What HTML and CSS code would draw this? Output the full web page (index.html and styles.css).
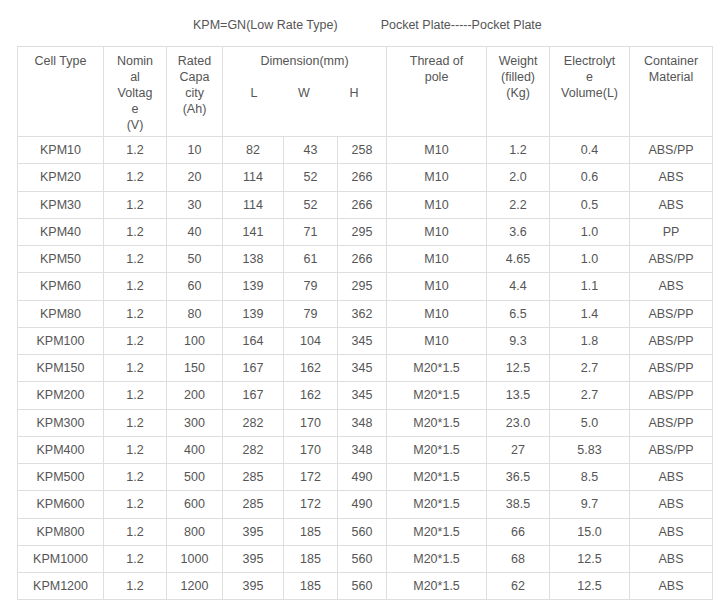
FILE: index.html
```html
<!DOCTYPE html>
<html lang="en">
<head>
<meta charset="utf-8">
<title>KPM Pocket Plate</title>
<link rel="stylesheet" href="styles.css">
</head>
<body>
<div class="page">
  <div class="title">
    <span class="title-a">KPM=GN(Low Rate Type)</span>
    <span class="title-b">Pocket Plate-----Pocket Plate</span>
  </div>
  <table class="spec">
    <colgroup>
      <col class="c1"><col class="c2"><col class="c3"><col class="c4"><col class="c5">
      <col class="c6"><col class="c7"><col class="c8"><col class="c9"><col class="c10">
    </colgroup>
    <thead>
      <tr>
        <th>Cell Type</th>
        <th>Nomin<br>al<br>Voltag<br>e<br>(V)</th>
        <th>Rated<br>Capa<br>city<br>(Ah)</th>
        <th colspan="3" class="dim">
          <div>Dimension(mm)</div>
          <div class="lwh"><span>L</span><span>W</span><span>H</span></div>
        </th>
        <th>Thread of<br>pole</th>
        <th>Weight<br>(filled)<br>(Kg)</th>
        <th>Electrolyt<br>e<br>Volume(L)</th>
        <th>Container<br>Material</th>
      </tr>
    </thead>
    <tbody>
      <tr><td>KPM10</td><td>1.2</td><td>10</td><td>82</td><td>43</td><td>258</td><td>M10</td><td>1.2</td><td>0.4</td><td>ABS/PP</td></tr>
      <tr><td>KPM20</td><td>1.2</td><td>20</td><td>114</td><td>52</td><td>266</td><td>M10</td><td>2.0</td><td>0.6</td><td>ABS</td></tr>
      <tr><td>KPM30</td><td>1.2</td><td>30</td><td>114</td><td>52</td><td>266</td><td>M10</td><td>2.2</td><td>0.5</td><td>ABS</td></tr>
      <tr><td>KPM40</td><td>1.2</td><td>40</td><td>141</td><td>71</td><td>295</td><td>M10</td><td>3.6</td><td>1.0</td><td>PP</td></tr>
      <tr><td>KPM50</td><td>1.2</td><td>50</td><td>138</td><td>61</td><td>266</td><td>M10</td><td>4.65</td><td>1.0</td><td>ABS/PP</td></tr>
      <tr><td>KPM60</td><td>1.2</td><td>60</td><td>139</td><td>79</td><td>295</td><td>M10</td><td>4.4</td><td>1.1</td><td>ABS</td></tr>
      <tr><td>KPM80</td><td>1.2</td><td>80</td><td>139</td><td>79</td><td>362</td><td>M10</td><td>6.5</td><td>1.4</td><td>ABS/PP</td></tr>
      <tr><td>KPM100</td><td>1.2</td><td>100</td><td>164</td><td>104</td><td>345</td><td>M10</td><td>9.3</td><td>1.8</td><td>ABS/PP</td></tr>
      <tr><td>KPM150</td><td>1.2</td><td>150</td><td>167</td><td>162</td><td>345</td><td>M20*1.5</td><td>12.5</td><td>2.7</td><td>ABS/PP</td></tr>
      <tr><td>KPM200</td><td>1.2</td><td>200</td><td>167</td><td>162</td><td>345</td><td>M20*1.5</td><td>13.5</td><td>2.7</td><td>ABS/PP</td></tr>
      <tr><td>KPM300</td><td>1.2</td><td>300</td><td>282</td><td>170</td><td>348</td><td>M20*1.5</td><td>23.0</td><td>5.0</td><td>ABS/PP</td></tr>
      <tr><td>KPM400</td><td>1.2</td><td>400</td><td>282</td><td>170</td><td>348</td><td>M20*1.5</td><td>27</td><td>5.83</td><td>ABS/PP</td></tr>
      <tr><td>KPM500</td><td>1.2</td><td>500</td><td>285</td><td>172</td><td>490</td><td>M20*1.5</td><td>36.5</td><td>8.5</td><td>ABS</td></tr>
      <tr><td>KPM600</td><td>1.2</td><td>600</td><td>285</td><td>172</td><td>490</td><td>M20*1.5</td><td>38.5</td><td>9.7</td><td>ABS</td></tr>
      <tr><td>KPM800</td><td>1.2</td><td>800</td><td>395</td><td>185</td><td>560</td><td>M20*1.5</td><td>66</td><td>15.0</td><td>ABS</td></tr>
      <tr><td>KPM1000</td><td>1.2</td><td>1000</td><td>395</td><td>185</td><td>560</td><td>M20*1.5</td><td>68</td><td>12.5</td><td>ABS</td></tr>
      <tr><td>KPM1200</td><td>1.2</td><td>1200</td><td>395</td><td>185</td><td>560</td><td>M20*1.5</td><td>62</td><td>12.5</td><td>ABS</td></tr>
    </tbody>
  </table>
</div>
</body>
</html>
```
FILE: styles.css
```css
* { box-sizing: border-box; }
html, body { margin: 0; padding: 0; background: #fff; }
body {
  font-family: "Liberation Sans", Arial, sans-serif;
  font-size: 12.5px;
  color: #555;
}
.page {
  padding: 0 0 0 17px;
  width: 728px;
}
.title {
  height: 46px;
  display: flex;
  align-items: center;
  padding-left: 176px;
  padding-top: 3px;
  line-height: 16px;
}
.title-b { margin-left: 43px; }
.spec {
  border-collapse: collapse;
  table-layout: fixed;
  width: 695px;
}
.c1 { width: 86px; }
.c2 { width: 63px; }
.c3 { width: 56px; }
.c4 { width: 61px; }
.c5 { width: 54px; }
.c6 { width: 49px; }
.c7 { width: 100px; }
.c8 { width: 63px; }
.c9 { width: 80px; }
.c10 { width: 83px; }
.spec th, .spec td {
  border: 1px solid #dedede;
  text-align: center;
  padding: 0;
  font-weight: normal;
}
.spec th {
  vertical-align: top;
  line-height: 16px;
  padding-top: 6px;
  height: 90px;
}
.spec td {
  height: 27.25px;
  line-height: 16px;
  vertical-align: middle;
}
.dim .lwh {
  display: flex;
  margin-top: 16px;
  padding-left: 26px;
}
.lwh span { display: block; width: 10px; text-align: center; }
.lwh span + span { margin-left: 39px; }
.lwh span:last-child { margin-left: 41px; }
```
